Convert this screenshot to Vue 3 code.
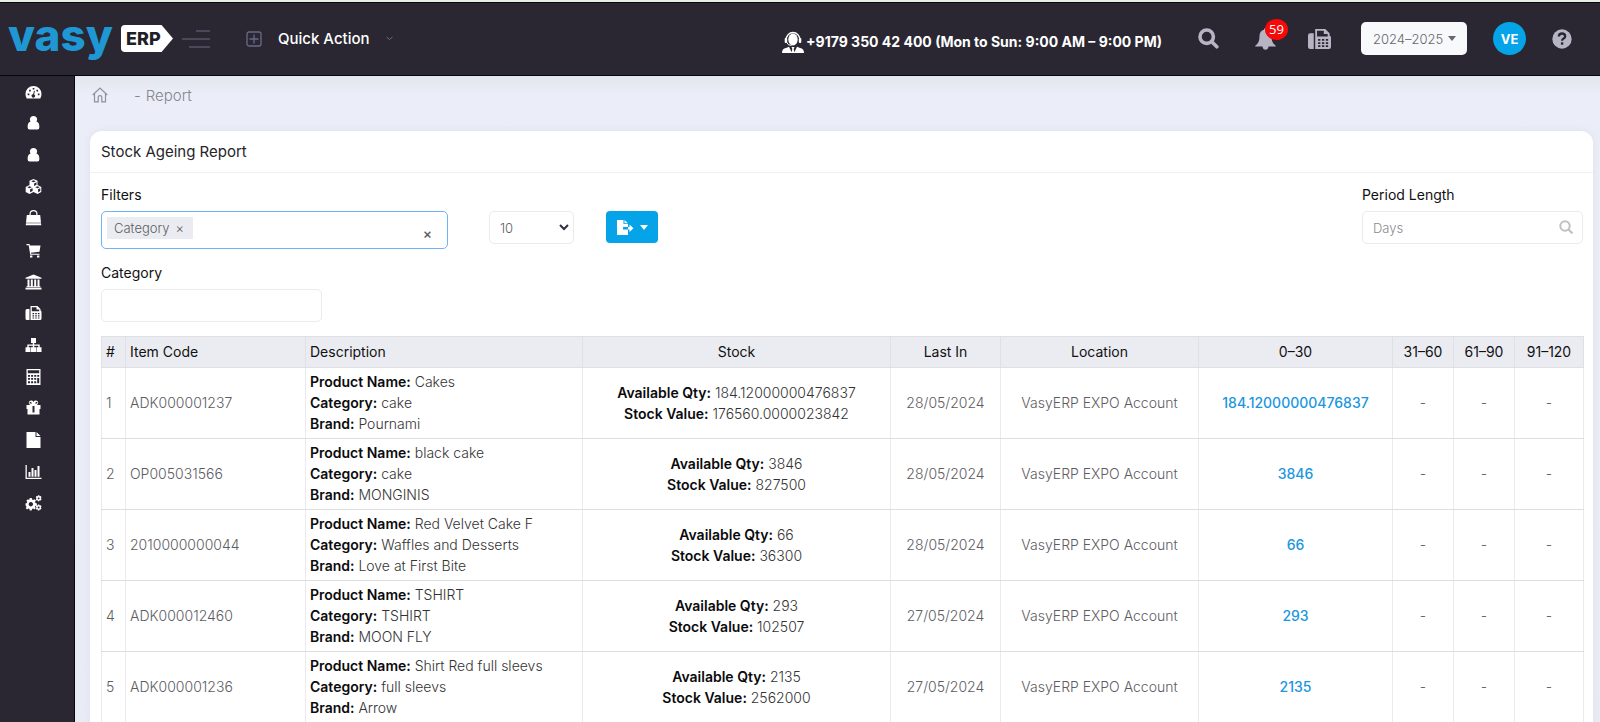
<script setup>
import { ref } from 'vue'

const menu = ['Dashboard', 'Contacts', 'Employees', 'Inventory', 'Purchase', 'Sales', 'Bank', 'POS', 'Network', 'Accounting', 'Loyalty', 'Documents', 'Reports', 'Settings']
const icons = [
  'M0 10a8 8 0 1 1 16 0q0 2.500-1.200 4.500H1.200Q0 12.500 0 10ZM2.200 9.500v1.700h1.700V9.500ZM3.600 5.700v1.700h1.700V5.700ZM7.200 3.900v1.700h1.700V3.900ZM10.900 5.700v1.700h1.700V5.700ZM12.300 9.500v1.700H14V9.500ZM8.500 6.800l-.9 3.400a1.700 1.700 0 1 0 1 .2L9.400 7Z',
  'M8 1a3.400 3.400 0 0 1 3 5.400q2.900.8 2.900 5.500 0 2.600-2 2.600H4.100q-2 0-2-2.600 0-4.700 2.900-5.500A3.400 3.400 0 0 1 8 1Z',
  'M8 1a3.400 3.400 0 0 1 3 5.400q2.900.8 2.900 5.500 0 2.600-2 2.600H4.100q-2 0-2-2.600 0-4.700 2.900-5.500A3.400 3.400 0 0 1 8 1Z',
  'M8 0l4 1.700v4.300l3.800 2v5L12 15l-4-2-4 2-3.800-2V8L4 6V1.700ZM8 1.300 5.700 2.300 8 3.300l2.300-1ZM8.600 4.400v2.500L11 5.800V3.300ZM4 7.200 1.800 8.200 4 9.300l2.200-1.100ZM4.600 10.300v3l2.500-1.300V9.200ZM12 7.200 9.800 8.200 12 9.300l2.200-1.100ZM12.600 10.300v3l2.200-1.300V9.200Z',
  'M1.300 5H4V4a4 4 0 0 1 8 0v1h2.700l.8 7.700H.5ZM5.200 5h5.600V4a2.800 2.800 0 0 0-5.600 0ZM.4 13.300h15.200l.1 2H.3Z',
  'M1 2h3l.4 1.500H15L14 9.700l-8.500 1 .2 1H14v1H4.700L3.200 3.200H1ZM4.500 13.500h2.400v2H4.500ZM11.500 13.500h2.400v2h-2.400Z',
  'M8 .5 16 3.800v1H0v-1ZM2 5.500h2v6.700h1.300V5.500h2v6.700h1.400V5.500h2v6.700H12V5.500h2v6.700h1v1H1v-1h1ZM0 13.700h16v1.800H0Z',
  'M1.500 4H4v11H1.500Q0 15 0 13.500v-8Q0 4 1.500 4ZM5 1h7l3 3v1.500q1 .4 1 1.500v6.500q0 1.500-1.500 1.500H5ZM6.300 2.200v4h7.400V4.500H11V2.200ZM7 8v1.200h1.600V8ZM9.700 8v1.200h1.600V8ZM12.400 8v1.200H14V8ZM7 10.200v1.200h1.600v-1.200ZM9.700 10.200v1.200h1.600v-1.200ZM12.400 10.200v1.200H14v-1.200ZM7 12.400v1.200h1.600v-1.200ZM9.700 12.400v1.200h1.600v-1.200ZM12.400 12.400v1.200H14v-1.200Z',
  'M5.500 1h5v5H8.700v1.500h5.500v2.700H16V15h-5v-4.800h1.800V8.800H8.700v1.400h1.800V15h-5v-4.800h1.800V8.800H3.200v1.400H5V15H0v-4.800h1.800V7.500h5.500V6H5.500Z',
  'M1 0h14v16H1ZM2.300 1.300v3h11.400v-3ZM2.500 6v1.700h2V6ZM5.600 6v1.700h2V6ZM8.700 6v1.700h2V6ZM11.700 6v1.700h2V6ZM2.500 9v1.700h2V9ZM5.600 9v1.700h2V9ZM8.700 9v1.700h2V9ZM11.700 9v5.300h2V9ZM2.500 12.300v2h2v-2ZM5.600 12.300v2h2v-2ZM8.700 12.300v2h2v-2Z',
  'M1 5h3.800a2.400 2.400 0 1 1 3.200-3 2.400 2.400 0 1 1 3.200 3H15v4h-1v5.500H2V9H1ZM4.200 2.100v1.400h2.300l-1-1.400ZM10.500 2.100l-1 1.400h2.300V2.100ZM7 6v6.500h2V6Z',
  'M1 0h9v5h5v11H1ZM11 0l4 4h-4Z',
  'M0 1h1.300v12.700H16V15H0ZM3 8h2v4.700H3ZM6 4h2v8.700H6ZM9 6h2v6.700H9ZM12 2h2v10.700h-2Z',
  'M4.300 3h2l.3 1.500 1.200.5 1.200-.8 1.400 1.400-.9 1.300.5 1.200 1.400.3v2L10 10.700l-.5 1.200.8 1.200-1.400 1.400-1.200-.9-1.200.5-.3 1.400h-2L4 14.100l-1.200-.5-1.300.9-1.300-1.400.8-1.200L.5 10.700 0 10.400v-2l1.300-.3L1.800 7 .9 5.700l1.400-1.400 1.300.8ZM5.300 7a2.200 2.200 0 1 0 .1 0ZM12.500.3h1.300l.3 1 1.200-.2.7 1.200-.7.9.7 1-.7 1.200-1.200-.2-.3 1h-1.300l-.4-1-1.100.2-.7-1.200.7-1-.7-.9.7-1.200 1.100.2ZM13.100 2.400a.9.900 0 1 0 .1 0ZM12.500 9.500h1.300l.3 1 1.200-.2.700 1.200-.7.900.7 1-.7 1.200-1.200-.2-.3 1h-1.300l-.4-1-1.100.2-.7-1.200.7-1-.7-.9.7-1.200 1.100.2ZM13.100 11.600a.9.900 0 1 0 .1 0Z'
]
const faxIcon = icons[7]

const columns = ['#', 'Item Code', 'Description', 'Stock', 'Last In', 'Location', '0–30', '31–60', '61–90', '91–120']
const rows = [
  { code: 'ADK000001237', name: 'Cakes', category: 'cake', brand: 'Pournami', qty: '184.12000000476837', value: '176560.0000023842', date: '28/05/2024' },
  { code: 'OP005031566', name: 'black cake', category: 'cake', brand: 'MONGINIS', qty: '3846', value: '827500', date: '28/05/2024' },
  { code: '2010000000044', name: 'Red Velvet Cake F', category: 'Waffles and Desserts', brand: 'Love at First Bite', qty: '66', value: '36300', date: '28/05/2024' },
  { code: 'ADK000012460', name: 'TSHIRT', category: 'TSHIRT', brand: 'MOON FLY', qty: '293', value: '102507', date: '27/05/2024' },
  { code: 'ADK000001236', name: 'Shirt Red full sleevs', category: 'full sleevs', brand: 'Arrow', qty: '2135', value: '2562000', date: '27/05/2024' }
]
const pageSize = ref('10')
const days = ref('')
const category = ref('')
</script>

<template>
  <div class="app">
    <header class="topbar">
      <a class="logo" href="#" aria-label="vasy ERP">
        <span class="logo-word">vasy</span>
        <span class="logo-tag">ERP</span>
      </a>
      <button class="plain toggle" aria-label="Toggle menu">
        <svg width="28" height="20" viewBox="0 0 28 20" stroke="#55556b" stroke-width="1.6"><path d="M14 2h14M0 10h28M7 18h21" /></svg>
      </button>
      <button class="plain quick">
        <svg width="16" height="16" viewBox="0 0 16 16" fill="none" stroke="#6a6a88" stroke-width="1.3"><rect x="1" y="1" width="14" height="14" rx="2" /><path d="M8 3.500v9M3.500 8h9" /></svg>
        <span>Quick Action</span>
        <svg width="7" height="5" viewBox="0 0 7 5" fill="none" stroke="#6a6a88"><path d="m.5 1 3 2.500 3-2.500" /></svg>
      </button>
      <div class="support">
        <svg width="22" height="22" viewBox="0 0 22 22" fill="#fff">
          <path d="M4 9a7 7.500 0 0 1 14 0" fill="none" stroke="#fff" stroke-width="1.300" />
          <ellipse cx="11" cy="8.500" rx="4.700" ry="6" /><rect x="2.700" y="7" width="2.500" height="5" rx="1" /><rect x="16.800" y="7" width="2.500" height="5" rx="1" />
          <path d="M4.500 11q1 3.500 5 3.500" fill="none" stroke="#fff" />
          <path d="M0 22q0-4.500 4-5l3-1.300L10 22ZM22 22q0-4.500-4-5l-3-1.300L12 22ZM9.500 16h3l-.8 2 .8 4h-3l.8-4Z" />
        </svg>
        <span>+9179 350 42 400 (Mon to Sun: 9:00 AM – 9:00 PM)</span>
      </div>
      <button class="plain search" aria-label="Search">
        <svg width="21" height="21" viewBox="0 0 21 21" fill="none" stroke="#b7b5c3" stroke-width="3.600"><circle cx="8.700" cy="8.700" r="6.700" /><path d="m13.500 13.500 5.300 5.300" stroke-linecap="round" /></svg>
      </button>
      <button class="plain bell" aria-label="59 notifications">
        <svg width="21" height="22" viewBox="0 0 21 22" fill="#b7b5c3"><path d="M10.500 0q1.500 0 1.500 1.800 4.500 1 4.500 6.500 0 5.500 2.500 8 2 1.400 2 2.200H0q0-.8 2-2.200 2.500-2.500 2.500-8 0-5.500 4.500-6.500Q9 0 10.500 0ZM7.500 18.500h6q-.5 3.300-3 3.300t-3-3.300Z" /></svg>
        <span class="badge">59</span>
      </button>
      <button class="plain fax" aria-label="POS">
        <svg width="23" height="24" viewBox="0 0 16 16" fill="#b7b5c3" fill-rule="evenodd"><path :d="faxIcon" /></svg>
      </button>
      <button class="year"><span>2024–2025</span><i class="caret"></i></button>
      <button class="avatar">VE</button>
      <button class="plain help" aria-label="Help">
        <svg width="20" height="20" viewBox="0 0 20 20"><circle cx="10" cy="10" r="9.700" fill="#b7b5c3" /><path d="M6.800 7.500Q7 4.500 10 4.500t3.200 2.700q0 1.500-1.600 2.300-1.500.8-1.500 2.300" fill="none" stroke="#2a2733" stroke-width="2.300" /><rect x="8.900" y="13.300" width="2.400" height="2.400" fill="#2a2733" /></svg>
      </button>
    </header>

    <div class="body">
      <aside class="sidebar">
        <nav aria-label="Main">
          <a v-for="(d, i) in icons" :key="i" href="#" :aria-label="menu[i]">
            <svg width="17" height="16" viewBox="0 0 16 16" fill="#fff" fill-rule="evenodd"><path :d="d" /></svg>
          </a>
        </nav>
      </aside>

      <main class="content">
        <div class="crumbs">
          <a href="#" aria-label="Home"><svg width="16" height="16" viewBox="0 0 16 16" fill="none" stroke="#8f909c" stroke-width="1.200"><path d="m.7 8 7.300-7 7.300 7M2.500 6.500v8.300h3.700V10q0-1.300 1.800-1.300T9.800 10v4.800h3.700V6.500" /></svg></a>
          <span>-</span><span>Report</span>
        </div>

        <section class="card">
          <h1>Stock Ageing Report</h1>
          <div class="card-body">
            <div class="filters">
              <div class="field wide">
                <label for="filter-input">Filters</label>
                <div class="multi">
                  <span class="chip">Category <button class="plain" aria-label="Remove Category">×</button></span>
                  <input id="filter-input" type="text">
                  <button class="plain clear" aria-label="Clear filters">×</button>
                </div>
              </div>
              <div class="select-wrap">
                <select v-model="pageSize" aria-label="Rows per page"><option>10</option><option>25</option><option>50</option></select>
                <svg width="10" height="7" viewBox="0 0 10 7" fill="none" stroke="#33303f" stroke-width="2"><path d="m1 1 4 4 4-4" /></svg>
              </div>
              <button class="export" aria-label="Export">
                <svg width="17" height="15" viewBox="0 0 17 15" fill="#fff"><path d="M0 0h6.500v4H11v3H6v2.500h5V15H0ZM7.500 0 11 3.200H7.500ZM11 7h1.500V4.500L16.500 8.200l-4 3.800V9.500H11Z" /></svg>
                <i class="caret"></i>
              </button>
              <div class="field period">
                <label for="days">Period Length</label>
                <div class="text-wrap">
                  <input id="days" v-model="days" type="text" placeholder="Days">
                  <svg width="14" height="14" viewBox="0 0 14 14" fill="none" stroke="#c0c0c4" stroke-width="2"><circle cx="6" cy="6" r="4.700" /><path d="m9.500 9.500 4 4" /></svg>
                </div>
              </div>
            </div>
            <div class="field category">
              <label for="category">Category</label>
              <input id="category" v-model="category" type="text">
            </div>

            <table>
              <colgroup><col v-for="n in 10" :key="n" :class="'c' + n"></colgroup>
              <thead><tr><th v-for="c in columns" :key="c" scope="col">{{ c }}</th></tr></thead>
              <tbody>
                <tr v-for="(r, i) in rows" :key="r.code">
                  <td>{{ i + 1 }}</td>
                  <td>{{ r.code }}</td>
                  <td class="dark"><b>Product Name:</b> {{ r.name }}<br><b>Category:</b> {{ r.category }}<br><b>Brand:</b> {{ r.brand }}</td>
                  <td class="dark"><b>Available Qty:</b> {{ r.qty }}<br><b>Stock Value:</b> {{ r.value }}</td>
                  <td>{{ r.date }}</td>
                  <td>VasyERP EXPO Account</td>
                  <td><a href="#">{{ r.qty }}</a></td>
                  <td>-</td><td>-</td><td>-</td>
                </tr>
              </tbody>
            </table>
          </div>
        </section>
      </main>
    </div>
  </div>
</template>

<style>
body { margin: 0; background: #e9ecf6; }
</style>

<style scoped>
* { box-sizing: border-box; }
.app { height: 100vh; overflow: hidden; display: flex; flex-direction: column; font-family: Inter, "Liberation Sans", sans-serif; font-size: 14px; font-weight: 300; color: #5c5c62; }
button, input, select { font: inherit; color: inherit; }
.plain { border: 0; padding: 0; background: none; display: flex; align-items: center; cursor: pointer; }
a { color: inherit; text-decoration: none; }
svg { display: block; flex: none; }
.topbar { height: 76px; flex: none; display: flex; align-items: center; background: #2a2733; border-top: 2px solid #e6eee6; border-bottom: 1px solid #08070c; box-shadow: inset 0 1px #08070c; padding-right: 28px; }
.logo { display: flex; align-items: center; width: 165px; margin-left: 8px; }
.logo-word { width: 113px; height: 27px; line-height: 20px; font-size: 44px; font-weight: 800; color: #1f97d4; }
.logo-tag { width: 52px; height: 27px; background: #fff; border-radius: 4px; clip-path: polygon(0 0, 78% 0, 100% 50%, 78% 100%, 0 100%); color: #201e26; font-size: 18px; font-weight: 800; line-height: 27px; padding-left: 5px; }
.toggle { margin-left: 9px; }
.quick { margin-left: 36px; gap: 16px; font-size: 15px; font-weight: 500; color: #fff; }
.support { display: flex; align-items: center; gap: 2px; margin-left: auto; color: #fff; font-size: 14px; font-weight: 700; padding-top: 6px; }
.search { margin-left: 36px; }
.bell { margin-left: 36px; position: relative; }
.badge { position: absolute; left: 10px; top: -9px; width: 23px; height: 21px; border-radius: 50%; background: #f90808; color: #fff; font: 13px/21px "Open Sans", sans-serif; text-align: center; }
.fax { margin-left: 32px; }
.year { margin-left: 30px; width: 106px; height: 33px; border: 0; border-radius: 5px; background: #f8f9fb; display: flex; align-items: center; justify-content: space-between; padding: 0 11px 0 12px; font-size: 13px; color: #66666c; }
.caret { width: 0; height: 0; border: 4px solid transparent; border-top: 5px solid currentColor; border-bottom: 0; }
.avatar { margin-left: 26px; width: 33px; height: 33px; padding: 0; border: 0; border-radius: 50%; background: #05a3e8; color: #fff; font-size: 13px; font-weight: 700; }
.help { margin-left: 26px; }
.body { flex: 1; min-height: 0; display: flex; }
.sidebar { width: 75px; flex: none; background: #2a2733; border-right: 1px solid #08070c; }
.sidebar nav { display: grid; grid-template-rows: repeat(14, 1fr); height: 443px; }
.sidebar a { display: flex; align-items: center; justify-content: center; padding-right: 7px; }
.content { flex: 1; min-width: 0; padding: 0 7px 0 15px; background: linear-gradient(#e4e6ee, #ebeef8 20px, #e9ecf6); }
.crumbs { height: 55px; padding: 11px 2px 0; display: flex; align-items: flex-start; font-size: 15px; line-height: 18px; color: #85868e; }
.crumbs span { margin-left: 5px; }
.crumbs a + span { margin-left: 26px; }
.card { background: #fff; border-radius: 12px; box-shadow: 0 0 8px #dde0ec; min-height: 100%; }
h1 { margin: 0; height: 42px; padding: 0 11px; border-bottom: 1px solid #f1f1f4; font-size: 15px; line-height: 41px; font-weight: 400; color: #25242a; }
.card-body { padding: 10px 10px 0 11px; }
.filters { display: flex; align-items: flex-start; }
.field label { display: block; height: 28px; line-height: 24px; font-size: 14px; font-weight: 400; color: #111; }
.wide { width: 347px; }
.multi { height: 38px; border: 1px solid #6db5f5; border-radius: 5px; display: flex; align-items: flex-start; padding: 5px 15px 0 5px; }
.multi input { flex: 1; min-width: 0; border: 0; outline: 0; height: 22px; background: none; }
.chip { height: 22px; width: 86px; padding: 0 9px 0 7px; display: flex; align-items: center; justify-content: space-between; background: #ebecf1; font-size: 13px; }
.clear { margin-top: 9px; font-weight: 500; line-height: 16px; }
.select-wrap { position: relative; width: 85px; margin: 28px 0 0 41px; }
.select-wrap svg { position: absolute; right: 5px; top: 13px; pointer-events: none; }
select, .text-wrap input, .category input { width: 100%; height: 33px; border: 1px solid #ebebef; border-radius: 5px; background: #fff; appearance: none; padding: 0 10px; font-size: 13px; outline: 0; }
.export { margin: 28px 0 0 32px; width: 52px; height: 32px; padding: 0 10px 0 11px; border: 0; border-radius: 4px; background: #05a3e8; color: #fff; display: flex; align-items: center; justify-content: space-between; }
.period { width: 221px; margin-left: auto; }
.text-wrap { position: relative; }
.text-wrap svg { position: absolute; right: 10px; top: 9px; }
.text-wrap input::placeholder { color: #8b8b90; opacity: 1; }
.category { width: 221px; margin: 12px 0 14px; }
table { width: 100%; table-layout: fixed; border-collapse: collapse; line-height: 21px; }
.c1 { width: 24px; } .c2 { width: 180px; } .c3 { width: 277px; } .c4 { width: 308px; } .c5 { width: 110px; }
.c6 { width: 198px; } .c7 { width: 194px; } .c8 { width: 61px; } .c9 { width: 61px; } .c10 { width: 69px; }
th, td { border: 1px solid #e9e9ef; padding: 4px; text-align: center; white-space: nowrap; font-size: 14px; }
th { height: 31px; padding: 4px 4px 5px; background: #ebecf1; border-color: #dfe0e4; font-weight: 400; color: #111; }
td { height: 71px; padding: 3px 4px 4px; border-bottom-color: #dddde0; }
th:nth-child(-n+3), td:nth-child(-n+3) { text-align: left; }
.dark { color: #333; }
b { font-weight: 600; color: #0b0b0d; }
td a { color: #1b96e0; font-weight: 500; }
</style>
